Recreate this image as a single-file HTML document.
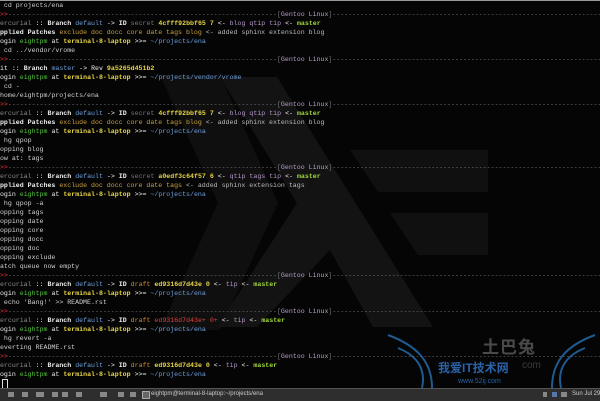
<!DOCTYPE html>
<html><head><meta charset="utf-8"><style>
html,body{margin:0;padding:0;width:600px;height:400px;overflow:hidden;background:#050505}
#bg{position:absolute;left:0;top:0}
pre{position:absolute;left:-4px;top:1px;margin:0;font-family:"Liberation Mono",monospace;font-size:6.6px;line-height:9px;color:#d0d0d0;white-space:pre;width:620px;overflow:hidden}
.g{color:#8a8a8a}.w{color:#eee}.b{font-weight:bold}.bl{color:#6d9fdc}.y{color:#e8d548;font-weight:bold}.p{color:#b597c9}.gr{color:#9fd63a;font-weight:bold}
.o{color:#c9a03c}.lg{color:#bbb}.e{color:#54c43c}.r{color:#e04040}.rd{color:#e03a3a}.dr{color:#d48a2a}.d{color:#777}.gt{color:#b9a0cc}
#top{position:absolute;left:0;top:0;width:600px;height:1px;background:#999}
#tb{position:absolute;left:0;top:388px;width:600px;height:12px;background:#2e2e2e;border-top:1px solid #555}
#tb span{position:absolute;font-family:"Liberation Sans",sans-serif;font-size:6px;color:#ccc;top:2px;white-space:nowrap}
.ic{position:absolute;top:3px;width:6px;height:5px;background:#888}
#cur{position:absolute;left:2px;top:379px;width:4px;height:8px;border:1px solid #ddd}
.wm{position:absolute;font-family:"Liberation Sans","Noto Sans CJK SC",sans-serif;white-space:nowrap}
</style></head><body>
<svg id="bg" width="600" height="400">
<polygon points="160,75 220,75 278,203 220,330 160,330 218,203" fill="#0f0f0f"/>
<polygon points="220,77 277,77 433,327 373,327 330,250 257,327 217,327 297,203" fill="#131313"/>
<polygon points="350,150 488,150 488,192 378,192" fill="#101010"/>
<polygon points="390,213 488,213 488,255 418,255" fill="#101010"/>
<path d="M388,335 C415,345 432,360 432,388 M398,348 C418,356 426,370 422,388" stroke="#1f5a90" stroke-width="2" fill="none"/>
<path d="M595,335 C568,345 552,360 552,388 M585,348 C565,356 557,370 561,388" stroke="#1f5a90" stroke-width="2" fill="none"/>
</svg>
<div id="top"></div>
<div class="wm" style="left:482px;top:333px;font-size:17px;color:#4a4a4a;font-weight:bold;letter-spacing:1px">土巴兔</div>
<div class="wm" style="left:438px;top:359px;font-size:12px;color:#2a62a8;font-weight:bold">我爱IT技术网</div>
<div class="wm" style="left:522px;top:360px;font-size:10px;color:#3a3a3a">com</div>
<div class="wm" style="left:458px;top:378px;font-size:7px;color:#2a62a8">www.52ij.com</div>
<pre>$ cd projects/ena
<span class="rd">->></span><span class="d">--------------------------------------------------------------------</span><span class="d">[</span><span class="gt">Gentoo Linux</span><span class="d">]--------------------------------------------------------------------------</span>
<span class="g">mercurial</span> <span class="w">::</span> <span class="w b">Branch</span> <span class="bl">default</span> <span class="w">-></span> <span class="w b">ID</span> <span class="d">secret</span> <span class="y">4cfff92bbf65 7</span> <span class="w"><-</span> <span class="p">blog qtip tip</span> <span class="w"><-</span> <span class="gr">master</span>
<span class="w b">Applied Patches</span> <span class="o">exclude doc docc core date tags blog</span> <span class="lg"><- added sphinx extension blog</span>
<span class="w">login</span> <span class="e">eightpm</span> <span class="w">at</span> <span class="y">terminal-8-laptop</span> <span class="w">>>=</span> <span class="bl">~/projects/ena</span>
$ cd ../vendor/vrome
<span class="rd">->></span><span class="d">--------------------------------------------------------------------</span><span class="d">[</span><span class="gt">Gentoo Linux</span><span class="d">]--------------------------------------------------------------------------</span>
<span class="w">Git</span> <span class="w">::</span> <span class="w b">Branch</span> <span class="bl">master</span> <span class="w">-></span> <span class="w">Rev</span> <span class="y">9a5265d451b2</span>
<span class="w">login</span> <span class="e">eightpm</span> <span class="w">at</span> <span class="y">terminal-8-laptop</span> <span class="w">>>=</span> <span class="bl">~/projects/vendor/vrome</span>
$ cd -
/home/eightpm/projects/ena
<span class="rd">->></span><span class="d">--------------------------------------------------------------------</span><span class="d">[</span><span class="gt">Gentoo Linux</span><span class="d">]--------------------------------------------------------------------------</span>
<span class="g">mercurial</span> <span class="w">::</span> <span class="w b">Branch</span> <span class="bl">default</span> <span class="w">-></span> <span class="w b">ID</span> <span class="d">secret</span> <span class="y">4cfff92bbf65 7</span> <span class="w"><-</span> <span class="p">blog qtip tip</span> <span class="w"><-</span> <span class="gr">master</span>
<span class="w b">Applied Patches</span> <span class="o">exclude doc docc core date tags blog</span> <span class="lg"><- added sphinx extension blog</span>
<span class="w">login</span> <span class="e">eightpm</span> <span class="w">at</span> <span class="y">terminal-8-laptop</span> <span class="w">>>=</span> <span class="bl">~/projects/ena</span>
$ hg qpop
Popping blog
Now at: tags
<span class="rd">->></span><span class="d">--------------------------------------------------------------------</span><span class="d">[</span><span class="gt">Gentoo Linux</span><span class="d">]--------------------------------------------------------------------------</span>
<span class="g">mercurial</span> <span class="w">::</span> <span class="w b">Branch</span> <span class="bl">default</span> <span class="w">-></span> <span class="w b">ID</span> <span class="d">secret</span> <span class="y">a0edf3c64f57 6</span> <span class="w"><-</span> <span class="p">qtip tags tip</span> <span class="w"><-</span> <span class="gr">master</span>
<span class="w b">Applied Patches</span> <span class="o">exclude doc docc core date tags</span> <span class="lg"><- added sphinx extension tags</span>
<span class="w">login</span> <span class="e">eightpm</span> <span class="w">at</span> <span class="y">terminal-8-laptop</span> <span class="w">>>=</span> <span class="bl">~/projects/ena</span>
$ hg qpop -a
Popping tags
Popping date
Popping core
Popping docc
Popping doc
Popping exclude
Patch queue now empty
<span class="rd">->></span><span class="d">--------------------------------------------------------------------</span><span class="d">[</span><span class="gt">Gentoo Linux</span><span class="d">]--------------------------------------------------------------------------</span>
<span class="g">mercurial</span> <span class="w">::</span> <span class="w b">Branch</span> <span class="bl">default</span> <span class="w">-></span> <span class="w b">ID</span> <span class="dr">draft</span> <span class="y">ed9316d7d43e 0</span> <span class="w"><-</span> <span class="p">tip</span> <span class="w"><-</span> <span class="gr">master</span>
<span class="w">login</span> <span class="e">eightpm</span> <span class="w">at</span> <span class="y">terminal-8-laptop</span> <span class="w">>>=</span> <span class="bl">~/projects/ena</span>
$ echo 'Bang!' >> README.rst
<span class="rd">->></span><span class="d">--------------------------------------------------------------------</span><span class="d">[</span><span class="gt">Gentoo Linux</span><span class="d">]--------------------------------------------------------------------------</span>
<span class="g">mercurial</span> <span class="w">::</span> <span class="w b">Branch</span> <span class="bl">default</span> <span class="w">-></span> <span class="w b">ID</span> <span class="dr">draft</span> <span class="r">ed9316d7d43e+ 0+</span> <span class="w"><-</span> <span class="p">tip</span> <span class="w"><-</span> <span class="gr">master</span>
<span class="w">login</span> <span class="e">eightpm</span> <span class="w">at</span> <span class="y">terminal-8-laptop</span> <span class="w">>>=</span> <span class="bl">~/projects/ena</span>
$ hg revert -a
Reverting README.rst
<span class="rd">->></span><span class="d">--------------------------------------------------------------------</span><span class="d">[</span><span class="gt">Gentoo Linux</span><span class="d">]--------------------------------------------------------------------------</span>
<span class="g">mercurial</span> <span class="w">::</span> <span class="w b">Branch</span> <span class="bl">default</span> <span class="w">-></span> <span class="w b">ID</span> <span class="dr">draft</span> <span class="y">ed9316d7d43e 0</span> <span class="w"><-</span> <span class="p">tip</span> <span class="w"><-</span> <span class="gr">master</span>
<span class="w">login</span> <span class="e">eightpm</span> <span class="w">at</span> <span class="y">terminal-8-laptop</span> <span class="w">>>=</span> <span class="bl">~/projects/ena</span>
</pre>
<div id="cur"></div>
<div id="tb">
<div class="ic" style="left:8px"></div><div class="ic" style="left:22px"></div><div class="ic" style="left:36px;width:8px"></div><div class="ic" style="left:52px"></div><div class="ic" style="left:62px"></div><div class="ic" style="left:76px"></div><div class="ic" style="left:100px;width:7px"></div><div class="ic" style="left:118px"></div><div class="ic" style="left:130px"></div>
<div class="ic" style="left:142px;width:6px;height:6px;background:#666;border:1px solid #aaa;top:2px"></div>
<span style="left:151px">eightpm@terminal-8-laptop:~/projects/ena</span>
<div class="ic" style="left:543px;width:4px"></div><div class="ic" style="left:552px;width:5px;background:#5577aa"></div><div class="ic" style="left:561px;width:6px"></div>
<span style="left:572px">Sun Jul 29</span>
</div>
</body></html>
